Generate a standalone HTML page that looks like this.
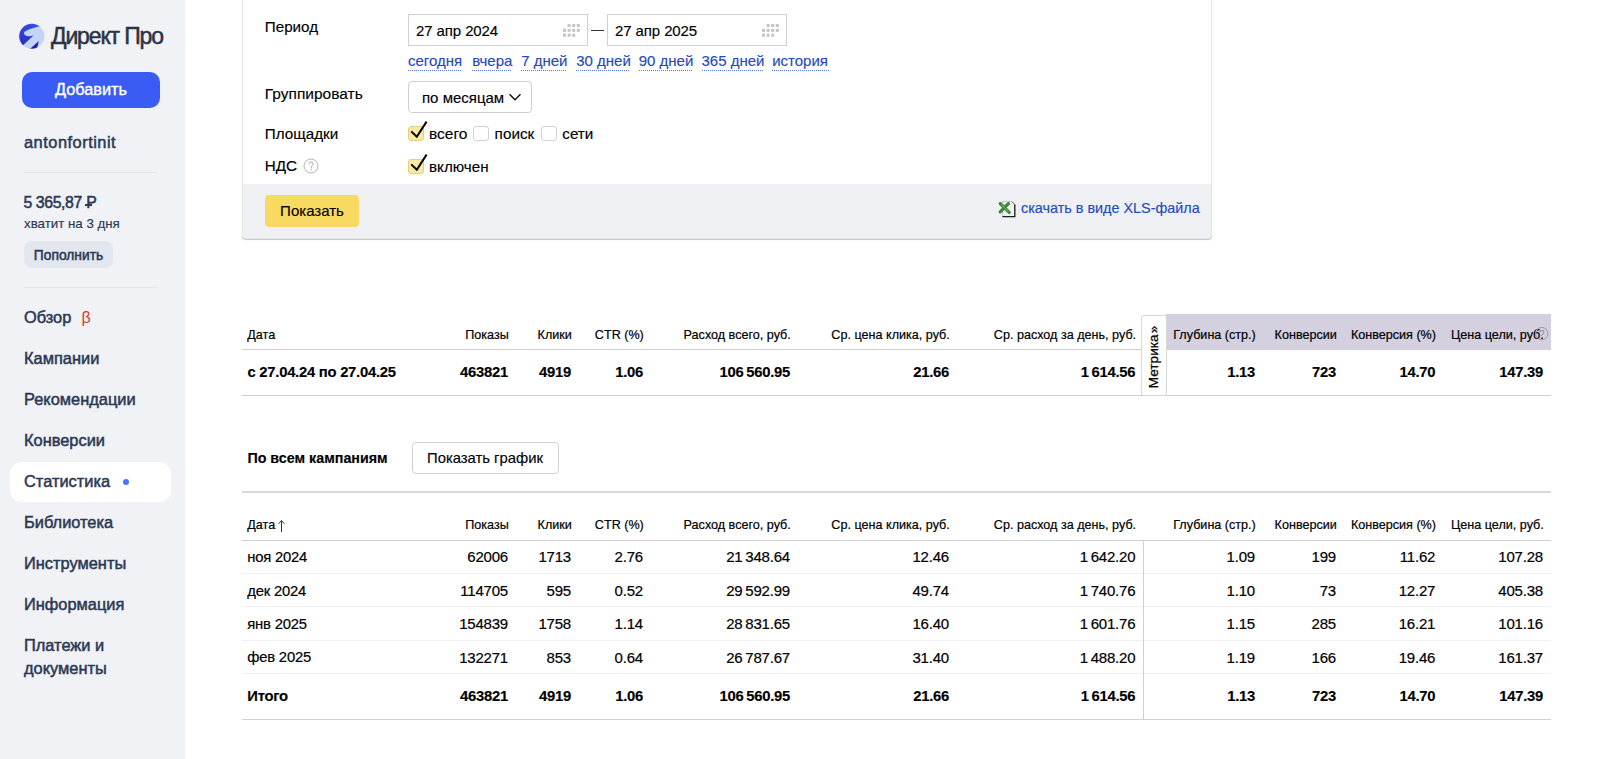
<!DOCTYPE html>
<html><head><meta charset="utf-8">
<style>
html,body{margin:0;padding:0;}
body{width:1600px;height:759px;position:relative;overflow:hidden;background:#fff;font-family:"Liberation Sans",sans-serif;color:#000;}
.t{position:absolute;white-space:nowrap;-webkit-text-stroke-width:0.15px;}
.r{position:absolute;box-sizing:border-box;}
svg{position:absolute;}
</style></head><body>
<div class="r" style="left:0px;top:0px;width:185px;height:759px;background:#f1f2f6;"></div>
<svg style="left:16px;top:21px" width="32" height="32" viewBox="0 0 759 759">
<defs><linearGradient id="lg" x1="0" y1="0" x2="0" y2="1"><stop offset="0" stop-color="#3452e8"/><stop offset="1" stop-color="#2722b2"/></linearGradient>
<clipPath id="cc"><circle cx="374" cy="362" r="297"/></clipPath></defs>
<circle cx="374" cy="362" r="297" fill="#c4d4f9"/>
<g clip-path="url(#cc)">
<path d="M420,340 C330,378 205,372 190,298 C182,230 300,198 560,124 L700,80 L700,0 L0,0 L0,759 L60,675 Z" fill="url(#lg)"/>
<path d="M540,472 L250,735 L480,740 Z" fill="#2722b2"/>
</g>
</svg>
<div class="t" style="left:51px;top:21.53px;font-size:23px;line-height:29px;color:#2b3342;letter-spacing:-1.15px;-webkit-text-stroke:0.5px #2b3342;">Директ Про</div>
<div class="r" style="left:22px;top:72px;width:138px;height:36px;background:#3a5cf5;border-radius:10px;"></div>
<div class="t" style="left:91px;transform:translateX(-50%);top:79.05px;font-size:16.3px;line-height:20px;color:#fff;-webkit-text-stroke:0.4px #fff;">Добавить</div>
<div class="t" style="left:24px;top:132.02px;font-size:16.4px;line-height:20px;color:#2b3853;letter-spacing:0.5px;-webkit-text-stroke:0.5px #2b3853;">antonfortinit</div>
<div class="r" style="left:24px;top:172px;width:133px;height:1px;background:#e2e4ea;"></div>
<div class="t" style="left:23.5px;top:192.53px;font-size:15.8px;line-height:20px;color:#2b3853;letter-spacing:-0.4px;-webkit-text-stroke:0.5px #2b3853;">5 365,87 <span style="position:relative;margin-left:0.5px">Р<span style="position:absolute;left:-1.5px;top:10.6px;width:7.5px;height:1.7px;background:#2d3a4f"></span></span></div>
<div class="t" style="left:24px;top:214.69px;font-size:13.3px;line-height:17px;color:#2b3853;-webkit-text-stroke:0.15px #2d3a4f;">хватит на 3 дня</div>
<div class="r" style="left:24px;top:241px;width:89px;height:27px;background:#e2e6ee;border-radius:8px;"></div>
<div class="t" style="left:68.5px;transform:translateX(-50%);top:246.72px;font-size:13.8px;line-height:17px;color:#2b3853;-webkit-text-stroke:0.5px #2b3853;">Пополнить</div>
<div class="r" style="left:24px;top:287px;width:133px;height:1px;background:#e2e4ea;"></div>
<div class="r" style="left:10px;top:462px;width:161px;height:40px;background:#fff;border-radius:12px;"></div>
<div class="t" style="left:24px;top:307.12px;font-size:16.4px;line-height:20px;color:#2b3853;-webkit-text-stroke:0.5px #2b3853;">Обзор</div>
<div class="t" style="left:24px;top:347.92px;font-size:16.4px;line-height:20px;color:#2b3853;-webkit-text-stroke:0.5px #2b3853;">Кампании</div>
<div class="t" style="left:24px;top:388.72px;font-size:16.4px;line-height:20px;color:#2b3853;-webkit-text-stroke:0.5px #2b3853;">Рекомендации</div>
<div class="t" style="left:24px;top:429.52px;font-size:16.4px;line-height:20px;color:#2b3853;-webkit-text-stroke:0.5px #2b3853;">Конверсии</div>
<div class="t" style="left:24px;top:470.62px;font-size:16.4px;line-height:20px;color:#2b3853;-webkit-text-stroke:0.5px #2b3853;">Статистика</div>
<div class="t" style="left:24px;top:511.62px;font-size:16.4px;line-height:20px;color:#2b3853;-webkit-text-stroke:0.5px #2b3853;">Библиотека</div>
<div class="t" style="left:24px;top:552.62px;font-size:16.4px;line-height:20px;color:#2b3853;-webkit-text-stroke:0.5px #2b3853;">Инструменты</div>
<div class="t" style="left:24px;top:593.62px;font-size:16.4px;line-height:20px;color:#2b3853;-webkit-text-stroke:0.5px #2b3853;">Информация</div>
<div class="t" style="left:81.5px;top:307.96px;font-size:16px;line-height:20px;color:#d9372a;-webkit-text-stroke:0px;">β</div>
<div class="r" style="left:123px;top:479px;width:6px;height:6px;background:#4a74f6;border-radius:50%;"></div>
<div class="t" style="left:24px;top:635.32px;font-size:16.4px;line-height:20px;color:#2b3853;-webkit-text-stroke:0.5px #2b3853;">Платежи и</div>
<div class="t" style="left:24px;top:658.32px;font-size:16.4px;line-height:20px;color:#2b3853;-webkit-text-stroke:0.5px #2b3853;">документы</div>
<div class="r" style="left:242px;top:-5px;width:970px;height:244px;border:1px solid #e6e6e6;border-radius:0 0 4px 4px;box-shadow:0 1px 1px rgba(0,0,0,0.22);background:#fff;"></div>
<div class="r" style="left:243px;top:184px;width:968px;height:54px;background:#eff0f3;border-radius:0 0 3px 3px;"></div>
<div class="t" style="left:264.8px;top:17.23px;font-size:15.2px;line-height:19px;">Период</div>
<div class="t" style="left:264.8px;top:84.23px;font-size:15.5px;line-height:19px;">Группировать</div>
<div class="t" style="left:264.8px;top:123.93px;font-size:15.2px;line-height:19px;">Площадки</div>
<div class="t" style="left:264.8px;top:156.43px;font-size:15.2px;line-height:19px;">НДС</div>
<svg style="left:302.5px;top:157.6px" width="16" height="16" viewBox="0 0 16 16"><circle cx="8" cy="8" r="7" fill="none" stroke="#b4b4b4" stroke-width="1"/><path d="M5.9,6.2 C5.9,4.8 7,4.0 8.1,4.0 C9.3,4.0 10.2,4.8 10.2,5.9 C10.2,7.4 8.2,7.6 8.2,9.6 V10.2" fill="none" stroke="#a4a4a4" stroke-width="1"/><circle cx="8.2" cy="11.7" r="0.65" fill="#a4a4a4"/></svg>
<div class="r" style="left:408px;top:14px;width:180px;height:32px;border:1px solid #d0d0d0;background:#fff;"></div>
<div class="t" style="left:416px;top:20.70px;font-size:15px;line-height:19px;letter-spacing:-0.1px;">27 апр 2024</div>
<div class="r" style="left:607px;top:14px;width:180px;height:32px;border:1px solid #d0d0d0;background:#fff;"></div>
<div class="t" style="left:615px;top:20.70px;font-size:15px;line-height:19px;letter-spacing:-0.1px;">27 апр 2025</div>
<svg style="left:562.5px;top:24.3px" width="18" height="14"><rect x="4.6" y="0.00" width="3" height="3" fill="#c4c4c4"/><rect x="9.2" y="0.00" width="3" height="3" fill="#c4c4c4"/><rect x="13.8" y="0.00" width="3" height="3" fill="#c4c4c4"/><rect x="0.0" y="4.85" width="3" height="3" fill="#c4c4c4"/><rect x="4.6" y="4.85" width="3" height="3" fill="#c4c4c4"/><rect x="9.2" y="4.85" width="3" height="3" fill="#c4c4c4"/><rect x="13.8" y="4.85" width="3" height="3" fill="#c4c4c4"/><rect x="0.0" y="9.70" width="3" height="3" fill="#c4c4c4"/><rect x="4.6" y="9.70" width="3" height="3" fill="#c4c4c4"/><rect x="9.2" y="9.70" width="3" height="3" fill="#c4c4c4"/></svg>
<svg style="left:761.5px;top:24.3px" width="18" height="14"><rect x="4.6" y="0.00" width="3" height="3" fill="#c4c4c4"/><rect x="9.2" y="0.00" width="3" height="3" fill="#c4c4c4"/><rect x="13.8" y="0.00" width="3" height="3" fill="#c4c4c4"/><rect x="0.0" y="4.85" width="3" height="3" fill="#c4c4c4"/><rect x="4.6" y="4.85" width="3" height="3" fill="#c4c4c4"/><rect x="9.2" y="4.85" width="3" height="3" fill="#c4c4c4"/><rect x="13.8" y="4.85" width="3" height="3" fill="#c4c4c4"/><rect x="0.0" y="9.70" width="3" height="3" fill="#c4c4c4"/><rect x="4.6" y="9.70" width="3" height="3" fill="#c4c4c4"/><rect x="9.2" y="9.70" width="3" height="3" fill="#c4c4c4"/></svg>
<div class="r" style="left:590.5px;top:30px;width:13px;height:1.2px;background:#333;"></div>
<div class="t" style="left:408px;top:50.90px;font-size:15px;line-height:19px;color:#2549b9;-webkit-text-stroke:0.15px #2549b9;">сегодня</div>
<div class="r" style="left:408px;top:69.5px;width:54.4px;height:1px;background:repeating-linear-gradient(90deg,rgba(37,73,185,0.75) 0 1px,transparent 1px 2px);"></div>
<div class="t" style="left:472.2px;top:50.90px;font-size:15px;line-height:19px;color:#2549b9;-webkit-text-stroke:0.15px #2549b9;">вчера</div>
<div class="r" style="left:472.2px;top:69.5px;width:39.4px;height:1px;background:repeating-linear-gradient(90deg,rgba(37,73,185,0.75) 0 1px,transparent 1px 2px);"></div>
<div class="t" style="left:521.2px;top:50.90px;font-size:15px;line-height:19px;color:#2549b9;-webkit-text-stroke:0.15px #2549b9;">7 дней</div>
<div class="r" style="left:521.2px;top:69.5px;width:45.6px;height:1px;background:repeating-linear-gradient(90deg,rgba(37,73,185,0.75) 0 1px,transparent 1px 2px);"></div>
<div class="t" style="left:576.2px;top:50.90px;font-size:15px;line-height:19px;color:#2549b9;-webkit-text-stroke:0.15px #2549b9;">30 дней</div>
<div class="r" style="left:576.2px;top:69.5px;width:53.5px;height:1px;background:repeating-linear-gradient(90deg,rgba(37,73,185,0.75) 0 1px,transparent 1px 2px);"></div>
<div class="t" style="left:638.7px;top:50.90px;font-size:15px;line-height:19px;color:#2549b9;-webkit-text-stroke:0.15px #2549b9;">90 дней</div>
<div class="r" style="left:638.7px;top:69.5px;width:53.4px;height:1px;background:repeating-linear-gradient(90deg,rgba(37,73,185,0.75) 0 1px,transparent 1px 2px);"></div>
<div class="t" style="left:701.5px;top:50.90px;font-size:15px;line-height:19px;color:#2549b9;-webkit-text-stroke:0.15px #2549b9;">365 дней</div>
<div class="r" style="left:701.5px;top:69.5px;width:61.3px;height:1px;background:repeating-linear-gradient(90deg,rgba(37,73,185,0.75) 0 1px,transparent 1px 2px);"></div>
<div class="t" style="left:772.2px;top:50.90px;font-size:15px;line-height:19px;color:#2549b9;-webkit-text-stroke:0.15px #2549b9;">история</div>
<div class="r" style="left:772.2px;top:69.5px;width:56.8px;height:1px;background:repeating-linear-gradient(90deg,rgba(37,73,185,0.75) 0 1px,transparent 1px 2px);"></div>
<div class="r" style="left:408px;top:81px;width:124px;height:32px;border:1px solid #cfcfcf;border-radius:4px;background:#fff;"></div>
<div class="t" style="left:422px;top:87.80px;font-size:15px;line-height:19px;">по месяцам</div>
<svg style="left:508px;top:92px" width="14" height="10" viewBox="0 0 14 10"><path d="M1.5,2.2 L7,7.8 L12.5,2.2" fill="none" stroke="#111" stroke-width="1.4"/></svg>
<div class="r" style="left:408.3px;top:125.7px;width:15.5px;height:15.5px;background:#fbe8a5;border:1px solid #e6cf7c;border-radius:3px;"></div>
<svg style="left:408.3px;top:119.7px" width="22" height="22" viewBox="0 0 22 22"><path d="M3.2,11.4 L8.8,16.8 L18.6,1.6" fill="none" stroke="#000" stroke-width="2"/></svg>
<div class="r" style="left:473.2px;top:125.7px;width:15.5px;height:15.5px;background:#fff;border:1px solid #d3d3d3;border-radius:3px;"></div>
<div class="r" style="left:541.3px;top:125.7px;width:15.5px;height:15.5px;background:#fff;border:1px solid #d3d3d3;border-radius:3px;"></div>
<div class="r" style="left:408.3px;top:158.8px;width:15.5px;height:15.5px;background:#fbe8a5;border:1px solid #e6cf7c;border-radius:3px;"></div>
<svg style="left:408.3px;top:152.8px" width="22" height="22" viewBox="0 0 22 22"><path d="M3.2,11.4 L8.8,16.8 L18.6,1.6" fill="none" stroke="#000" stroke-width="2"/></svg>
<div class="t" style="left:429px;top:123.63px;font-size:15.5px;line-height:19px;">всего</div>
<div class="t" style="left:494.6px;top:123.70px;font-size:15.3px;line-height:19px;">поиск</div>
<div class="t" style="left:562.3px;top:123.73px;font-size:15.2px;line-height:19px;">сети</div>
<div class="t" style="left:429px;top:156.63px;font-size:15.2px;line-height:19px;">включен</div>
<div class="r" style="left:265px;top:195px;width:94px;height:32px;background:#f8d962;border-radius:4px;"></div>
<div class="t" style="left:312px;transform:translateX(-50%);top:201.30px;font-size:15px;line-height:19px;">Показать</div>
<svg style="left:994px;top:196px" width="30" height="26" viewBox="0 0 30 26">
<path d="M8.6,5.4 H17.6 L20.8,8.6 V20.5 H8.6 Z" fill="#f3f3f3" stroke="#b0b0b0" stroke-width="0.7"/>
<path d="M20.8,8.6 V20.6 H8.4" fill="none" stroke="#1e1e1e" stroke-width="1.3"/>
<path d="M17.6,5.4 L20.8,8.6" fill="none" stroke="#555" stroke-width="0.9"/>
<path d="M6.2,7.6 L15.2,16.4 M14.4,7.6 L6.2,15.8" stroke="#3f873c" stroke-width="3.3" stroke-linecap="round"/>
<path d="M7.2,8.6 L14.4,15.6" stroke="#8cc189" stroke-width="0.8"/>
</svg>
<div class="t" style="left:1021px;top:198.76px;font-size:14.4px;line-height:18px;color:#2549b9;-webkit-text-stroke:0.15px #2549b9;">скачать в виде XLS-файла</div>
<div class="r" style="left:1166px;top:314px;width:385px;height:36px;background:#d4d0df;"></div>
<div class="t" style="left:247.3px;top:326.53px;font-size:12.6px;line-height:16px;-webkit-text-stroke:0.2px #000;">Дата</div>
<div class="t" style="right:1091.2px;top:326.53px;font-size:12.6px;line-height:16px;-webkit-text-stroke:0.2px #000;">Показы</div>
<div class="t" style="right:1028.2px;top:326.53px;font-size:12.6px;line-height:16px;-webkit-text-stroke:0.2px #000;">Клики</div>
<div class="t" style="right:956.2px;top:326.53px;font-size:12.6px;line-height:16px;-webkit-text-stroke:0.2px #000;">CTR (%)</div>
<div class="t" style="right:809.2px;top:326.53px;font-size:12.6px;line-height:16px;-webkit-text-stroke:0.2px #000;">Расход всего, руб.</div>
<div class="t" style="right:650.2px;top:326.53px;font-size:12.6px;line-height:16px;-webkit-text-stroke:0.2px #000;">Ср. цена клика, руб.</div>
<div class="t" style="right:463.9000000000001px;top:326.53px;font-size:12.6px;line-height:16px;-webkit-text-stroke:0.2px #000;">Ср. расход за день, руб.</div>
<div class="t" style="right:344.20000000000005px;top:326.53px;font-size:12.6px;line-height:16px;-webkit-text-stroke:0.2px #000;">Глубина (стр.)</div>
<div class="t" style="right:263.20000000000005px;top:326.53px;font-size:12.6px;line-height:16px;-webkit-text-stroke:0.2px #000;">Конверсии</div>
<div class="t" style="right:164.0px;top:326.53px;font-size:12.6px;line-height:16px;-webkit-text-stroke:0.2px #000;">Конверсия (%)</div>
<div class="t" style="right:56.200000000000045px;top:326.53px;font-size:12.6px;line-height:16px;-webkit-text-stroke:0.2px #000;">Цена цели, руб.</div>
<svg style="left:1534px;top:326px" width="16" height="16" viewBox="0 0 16 16"><circle cx="7.8" cy="7.6" r="6.2" fill="none" stroke="#9c98a8" stroke-width="1"/><text x="7.6" y="11.6" text-anchor="middle" font-family="Liberation Sans" font-size="10.5" fill="#8e8a9a">?</text></svg>
<div class="r" style="left:242px;top:349px;width:924px;height:1px;background:#cfcfcf;"></div>
<div class="r" style="left:242px;top:395px;width:1309px;height:1px;background:#cfcfcf;"></div>
<div class="t" style="left:247.5px;top:363.27px;font-size:14.8px;line-height:18px;font-weight:700;letter-spacing:-0.25px;">с 27.04.24 по 27.04.25</div>
<div class="t" style="right:1092px;top:363.27px;font-size:14.8px;line-height:18px;font-weight:700;letter-spacing:-0.25px;">463821</div>
<div class="t" style="right:1029px;top:363.27px;font-size:14.8px;line-height:18px;font-weight:700;letter-spacing:-0.25px;">4919</div>
<div class="t" style="right:957px;top:363.27px;font-size:14.8px;line-height:18px;font-weight:700;letter-spacing:-0.25px;">1.06</div>
<div class="t" style="right:810px;top:363.27px;font-size:14.8px;line-height:18px;font-weight:700;letter-spacing:-0.25px;">106&#8201;560.95</div>
<div class="t" style="right:651px;top:363.27px;font-size:14.8px;line-height:18px;font-weight:700;letter-spacing:-0.25px;">21.66</div>
<div class="t" style="right:464.70000000000005px;top:363.27px;font-size:14.8px;line-height:18px;font-weight:700;letter-spacing:-0.25px;">1&#8201;614.56</div>
<div class="t" style="right:345px;top:363.27px;font-size:14.8px;line-height:18px;font-weight:700;letter-spacing:-0.25px;">1.13</div>
<div class="t" style="right:264px;top:363.27px;font-size:14.8px;line-height:18px;font-weight:700;letter-spacing:-0.25px;">723</div>
<div class="t" style="right:164.79999999999995px;top:363.27px;font-size:14.8px;line-height:18px;font-weight:700;letter-spacing:-0.25px;">14.70</div>
<div class="t" style="right:57px;top:363.27px;font-size:14.8px;line-height:18px;font-weight:700;letter-spacing:-0.25px;">147.39</div>
<div class="r" style="left:1140.5px;top:315px;width:26px;height:81px;background:#fff;border:1px solid #d9d9d9;border-radius:3px;box-shadow:0 0 1px rgba(0,0,0,0.05);"></div>
<div class="t" style="left:1154px;top:356.5px;font-size:13.6px;line-height:16px;-webkit-text-stroke:0.25px #000;transform:translate(-50%,-50%) rotate(-90deg);">Метрика&#8202;»</div>
<div class="t" style="left:247.4px;top:448.95px;font-size:14.3px;line-height:18px;font-weight:700;">По всем кампаниям</div>
<div class="r" style="left:411.5px;top:442px;width:147px;height:31.5px;border:1px solid #d2d2d2;border-radius:4px;background:#fff;"></div>
<div class="t" style="left:485px;transform:translateX(-50%);top:448.77px;font-size:14.8px;line-height:18px;">Показать график</div>
<div class="r" style="left:242px;top:490.5px;width:1309px;height:2px;background:#d9d9d9;"></div>
<div class="t" style="left:247.3px;top:517.03px;font-size:12.6px;line-height:16px;-webkit-text-stroke:0.2px #000;">Дата</div>
<svg style="left:277px;top:519px" width="9" height="14" viewBox="0 0 9 14"><path d="M4.5,13 V1.8 M1.6,4.8 L4.5,1.6 L7.4,4.8" fill="none" stroke="#333" stroke-width="1"/></svg>
<div class="t" style="right:1091.2px;top:517.03px;font-size:12.6px;line-height:16px;-webkit-text-stroke:0.2px #000;">Показы</div>
<div class="t" style="right:1028.2px;top:517.03px;font-size:12.6px;line-height:16px;-webkit-text-stroke:0.2px #000;">Клики</div>
<div class="t" style="right:956.2px;top:517.03px;font-size:12.6px;line-height:16px;-webkit-text-stroke:0.2px #000;">CTR (%)</div>
<div class="t" style="right:809.2px;top:517.03px;font-size:12.6px;line-height:16px;-webkit-text-stroke:0.2px #000;">Расход всего, руб.</div>
<div class="t" style="right:650.2px;top:517.03px;font-size:12.6px;line-height:16px;-webkit-text-stroke:0.2px #000;">Ср. цена клика, руб.</div>
<div class="t" style="right:463.9000000000001px;top:517.03px;font-size:12.6px;line-height:16px;-webkit-text-stroke:0.2px #000;">Ср. расход за день, руб.</div>
<div class="t" style="right:344.20000000000005px;top:517.03px;font-size:12.6px;line-height:16px;-webkit-text-stroke:0.2px #000;">Глубина (стр.)</div>
<div class="t" style="right:263.20000000000005px;top:517.03px;font-size:12.6px;line-height:16px;-webkit-text-stroke:0.2px #000;">Конверсии</div>
<div class="t" style="right:164.0px;top:517.03px;font-size:12.6px;line-height:16px;-webkit-text-stroke:0.2px #000;">Конверсия (%)</div>
<div class="t" style="right:56.200000000000045px;top:517.03px;font-size:12.6px;line-height:16px;-webkit-text-stroke:0.2px #000;">Цена цели, руб.</div>
<div class="r" style="left:242px;top:540px;width:1309px;height:1px;background:#cfcfcf;"></div>
<div class="t" style="left:247.3px;top:547.87px;font-size:14.8px;line-height:18px;letter-spacing:-0.2px;-webkit-text-stroke:0.2px #000;">ноя 2024</div>
<div class="t" style="right:1092px;top:547.30px;font-size:15px;line-height:19px;letter-spacing:-0.2px;-webkit-text-stroke:0.2px #000;">62006</div>
<div class="t" style="right:1029px;top:547.30px;font-size:15px;line-height:19px;letter-spacing:-0.2px;-webkit-text-stroke:0.2px #000;">1713</div>
<div class="t" style="right:957px;top:547.30px;font-size:15px;line-height:19px;letter-spacing:-0.2px;-webkit-text-stroke:0.2px #000;">2.76</div>
<div class="t" style="right:810px;top:547.30px;font-size:15px;line-height:19px;letter-spacing:-0.2px;-webkit-text-stroke:0.2px #000;">21&#8201;348.64</div>
<div class="t" style="right:651px;top:547.30px;font-size:15px;line-height:19px;letter-spacing:-0.2px;-webkit-text-stroke:0.2px #000;">12.46</div>
<div class="t" style="right:464.70000000000005px;top:547.30px;font-size:15px;line-height:19px;letter-spacing:-0.2px;-webkit-text-stroke:0.2px #000;">1&#8201;642.20</div>
<div class="t" style="right:345px;top:547.30px;font-size:15px;line-height:19px;letter-spacing:-0.2px;-webkit-text-stroke:0.2px #000;">1.09</div>
<div class="t" style="right:264px;top:547.30px;font-size:15px;line-height:19px;letter-spacing:-0.2px;-webkit-text-stroke:0.2px #000;">199</div>
<div class="t" style="right:164.79999999999995px;top:547.30px;font-size:15px;line-height:19px;letter-spacing:-0.2px;-webkit-text-stroke:0.2px #000;">11.62</div>
<div class="t" style="right:57px;top:547.30px;font-size:15px;line-height:19px;letter-spacing:-0.2px;-webkit-text-stroke:0.2px #000;">107.28</div>
<div class="t" style="left:247.3px;top:581.57px;font-size:14.8px;line-height:18px;letter-spacing:-0.2px;-webkit-text-stroke:0.2px #000;">дек 2024</div>
<div class="t" style="right:1092px;top:581.00px;font-size:15px;line-height:19px;letter-spacing:-0.2px;-webkit-text-stroke:0.2px #000;">114705</div>
<div class="t" style="right:1029px;top:581.00px;font-size:15px;line-height:19px;letter-spacing:-0.2px;-webkit-text-stroke:0.2px #000;">595</div>
<div class="t" style="right:957px;top:581.00px;font-size:15px;line-height:19px;letter-spacing:-0.2px;-webkit-text-stroke:0.2px #000;">0.52</div>
<div class="t" style="right:810px;top:581.00px;font-size:15px;line-height:19px;letter-spacing:-0.2px;-webkit-text-stroke:0.2px #000;">29&#8201;592.99</div>
<div class="t" style="right:651px;top:581.00px;font-size:15px;line-height:19px;letter-spacing:-0.2px;-webkit-text-stroke:0.2px #000;">49.74</div>
<div class="t" style="right:464.70000000000005px;top:581.00px;font-size:15px;line-height:19px;letter-spacing:-0.2px;-webkit-text-stroke:0.2px #000;">1&#8201;740.76</div>
<div class="t" style="right:345px;top:581.00px;font-size:15px;line-height:19px;letter-spacing:-0.2px;-webkit-text-stroke:0.2px #000;">1.10</div>
<div class="t" style="right:264px;top:581.00px;font-size:15px;line-height:19px;letter-spacing:-0.2px;-webkit-text-stroke:0.2px #000;">73</div>
<div class="t" style="right:164.79999999999995px;top:581.00px;font-size:15px;line-height:19px;letter-spacing:-0.2px;-webkit-text-stroke:0.2px #000;">12.27</div>
<div class="t" style="right:57px;top:581.00px;font-size:15px;line-height:19px;letter-spacing:-0.2px;-webkit-text-stroke:0.2px #000;">405.38</div>
<div class="t" style="left:247.3px;top:614.77px;font-size:14.8px;line-height:18px;letter-spacing:-0.2px;-webkit-text-stroke:0.2px #000;">янв 2025</div>
<div class="t" style="right:1092px;top:614.20px;font-size:15px;line-height:19px;letter-spacing:-0.2px;-webkit-text-stroke:0.2px #000;">154839</div>
<div class="t" style="right:1029px;top:614.20px;font-size:15px;line-height:19px;letter-spacing:-0.2px;-webkit-text-stroke:0.2px #000;">1758</div>
<div class="t" style="right:957px;top:614.20px;font-size:15px;line-height:19px;letter-spacing:-0.2px;-webkit-text-stroke:0.2px #000;">1.14</div>
<div class="t" style="right:810px;top:614.20px;font-size:15px;line-height:19px;letter-spacing:-0.2px;-webkit-text-stroke:0.2px #000;">28&#8201;831.65</div>
<div class="t" style="right:651px;top:614.20px;font-size:15px;line-height:19px;letter-spacing:-0.2px;-webkit-text-stroke:0.2px #000;">16.40</div>
<div class="t" style="right:464.70000000000005px;top:614.20px;font-size:15px;line-height:19px;letter-spacing:-0.2px;-webkit-text-stroke:0.2px #000;">1&#8201;601.76</div>
<div class="t" style="right:345px;top:614.20px;font-size:15px;line-height:19px;letter-spacing:-0.2px;-webkit-text-stroke:0.2px #000;">1.15</div>
<div class="t" style="right:264px;top:614.20px;font-size:15px;line-height:19px;letter-spacing:-0.2px;-webkit-text-stroke:0.2px #000;">285</div>
<div class="t" style="right:164.79999999999995px;top:614.20px;font-size:15px;line-height:19px;letter-spacing:-0.2px;-webkit-text-stroke:0.2px #000;">16.21</div>
<div class="t" style="right:57px;top:614.20px;font-size:15px;line-height:19px;letter-spacing:-0.2px;-webkit-text-stroke:0.2px #000;">101.16</div>
<div class="t" style="left:247.3px;top:648.07px;font-size:14.8px;line-height:18px;letter-spacing:-0.2px;-webkit-text-stroke:0.2px #000;">фев 2025</div>
<div class="t" style="right:1092px;top:647.50px;font-size:15px;line-height:19px;letter-spacing:-0.2px;-webkit-text-stroke:0.2px #000;">132271</div>
<div class="t" style="right:1029px;top:647.50px;font-size:15px;line-height:19px;letter-spacing:-0.2px;-webkit-text-stroke:0.2px #000;">853</div>
<div class="t" style="right:957px;top:647.50px;font-size:15px;line-height:19px;letter-spacing:-0.2px;-webkit-text-stroke:0.2px #000;">0.64</div>
<div class="t" style="right:810px;top:647.50px;font-size:15px;line-height:19px;letter-spacing:-0.2px;-webkit-text-stroke:0.2px #000;">26&#8201;787.67</div>
<div class="t" style="right:651px;top:647.50px;font-size:15px;line-height:19px;letter-spacing:-0.2px;-webkit-text-stroke:0.2px #000;">31.40</div>
<div class="t" style="right:464.70000000000005px;top:647.50px;font-size:15px;line-height:19px;letter-spacing:-0.2px;-webkit-text-stroke:0.2px #000;">1&#8201;488.20</div>
<div class="t" style="right:345px;top:647.50px;font-size:15px;line-height:19px;letter-spacing:-0.2px;-webkit-text-stroke:0.2px #000;">1.19</div>
<div class="t" style="right:264px;top:647.50px;font-size:15px;line-height:19px;letter-spacing:-0.2px;-webkit-text-stroke:0.2px #000;">166</div>
<div class="t" style="right:164.79999999999995px;top:647.50px;font-size:15px;line-height:19px;letter-spacing:-0.2px;-webkit-text-stroke:0.2px #000;">19.46</div>
<div class="t" style="right:57px;top:647.50px;font-size:15px;line-height:19px;letter-spacing:-0.2px;-webkit-text-stroke:0.2px #000;">161.37</div>
<div class="r" style="left:242px;top:573px;width:1309px;height:1px;background:#f0f0f0;"></div>
<div class="r" style="left:242px;top:606px;width:1309px;height:1px;background:#f0f0f0;"></div>
<div class="r" style="left:242px;top:640px;width:1309px;height:1px;background:#f0f0f0;"></div>
<div class="r" style="left:242px;top:673px;width:1309px;height:1px;background:#f0f0f0;"></div>
<div class="t" style="left:247.3px;top:686.57px;font-size:14.8px;line-height:18px;font-weight:700;letter-spacing:-0.25px;">Итого</div>
<div class="t" style="right:1092px;top:686.57px;font-size:14.8px;line-height:18px;font-weight:700;letter-spacing:-0.25px;">463821</div>
<div class="t" style="right:1029px;top:686.57px;font-size:14.8px;line-height:18px;font-weight:700;letter-spacing:-0.25px;">4919</div>
<div class="t" style="right:957px;top:686.57px;font-size:14.8px;line-height:18px;font-weight:700;letter-spacing:-0.25px;">1.06</div>
<div class="t" style="right:810px;top:686.57px;font-size:14.8px;line-height:18px;font-weight:700;letter-spacing:-0.25px;">106&#8201;560.95</div>
<div class="t" style="right:651px;top:686.57px;font-size:14.8px;line-height:18px;font-weight:700;letter-spacing:-0.25px;">21.66</div>
<div class="t" style="right:464.70000000000005px;top:686.57px;font-size:14.8px;line-height:18px;font-weight:700;letter-spacing:-0.25px;">1&#8201;614.56</div>
<div class="t" style="right:345px;top:686.57px;font-size:14.8px;line-height:18px;font-weight:700;letter-spacing:-0.25px;">1.13</div>
<div class="t" style="right:264px;top:686.57px;font-size:14.8px;line-height:18px;font-weight:700;letter-spacing:-0.25px;">723</div>
<div class="t" style="right:164.79999999999995px;top:686.57px;font-size:14.8px;line-height:18px;font-weight:700;letter-spacing:-0.25px;">14.70</div>
<div class="t" style="right:57px;top:686.57px;font-size:14.8px;line-height:18px;font-weight:700;letter-spacing:-0.25px;">147.39</div>
<div class="r" style="left:242px;top:719px;width:1309px;height:1px;background:#d2d2d2;"></div>
<div class="r" style="left:1143px;top:540px;width:1px;height:180px;background:#d0d0d0;"></div>
</body></html>
